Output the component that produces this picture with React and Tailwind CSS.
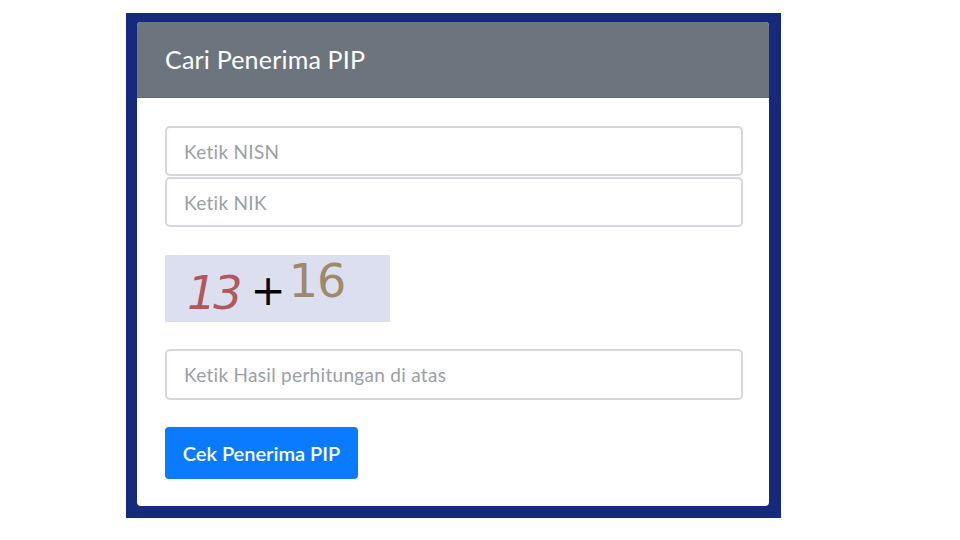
export default function App() {
  const inputCls =
    "block w-full rounded-[5px] border-2 border-[#d4d8de] px-[17px] text-[19px] tracking-[0.3px] placeholder:text-[#9aa0a6] outline-none";
  return (
    <div className="h-[540px] w-[960px] bg-white font-['Lato',sans-serif]">
      <div className="ml-[126px] pt-[13px]">
        <div className="w-[655px] h-[505px] bg-[#152a7a] pl-[11px] pr-[12px] pt-[9px] pb-[12px]">
          <div className="h-full rounded-[4px] bg-white overflow-hidden">
            <div className="h-[76px] bg-[#6c757d] border-b border-[#5f676e] flex items-center px-[28px]">
              <h1 className="text-[25px] text-white tracking-[0.2px]">Cari Penerima PIP</h1>
            </div>
            <div className="pl-[28px] pr-[26px] pt-[28px]">
              <input placeholder="Ketik NISN" className={inputCls + " h-[50px]"} />
              <input placeholder="Ketik NIK" className={inputCls + " h-[50px] mt-[1px]"} />
              <div className="mt-[28px] w-[225px] h-[67px] bg-[#dcdff0] flex items-end pl-[22px] pb-[4px] font-['DejaVu_Sans',sans-serif]">
                <span className="text-[46px] italic text-[#b0595c] leading-none tracking-[-3px] mb-[2px]">13</span>
                <span className="text-[42px] text-black leading-none ml-[11px] mb-[6px]">+</span>
                <span className="text-[46px] text-[#9c8a6a] leading-none tracking-[-1px] ml-[3px] mb-[14px]">16</span>
              </div>
              <input placeholder="Ketik Hasil perhitungan di atas" className={inputCls + " h-[51px] mt-[27px]"} />
              <button className="mt-[27px] h-[52px] w-[193px] rounded-[4px] bg-[#0a7bff] text-white text-[20px] font-semibold tracking-[0px]">
                Cek Penerima PIP
              </button>
            </div>
          </div>
        </div>
      </div>
    </div>
  );
}
